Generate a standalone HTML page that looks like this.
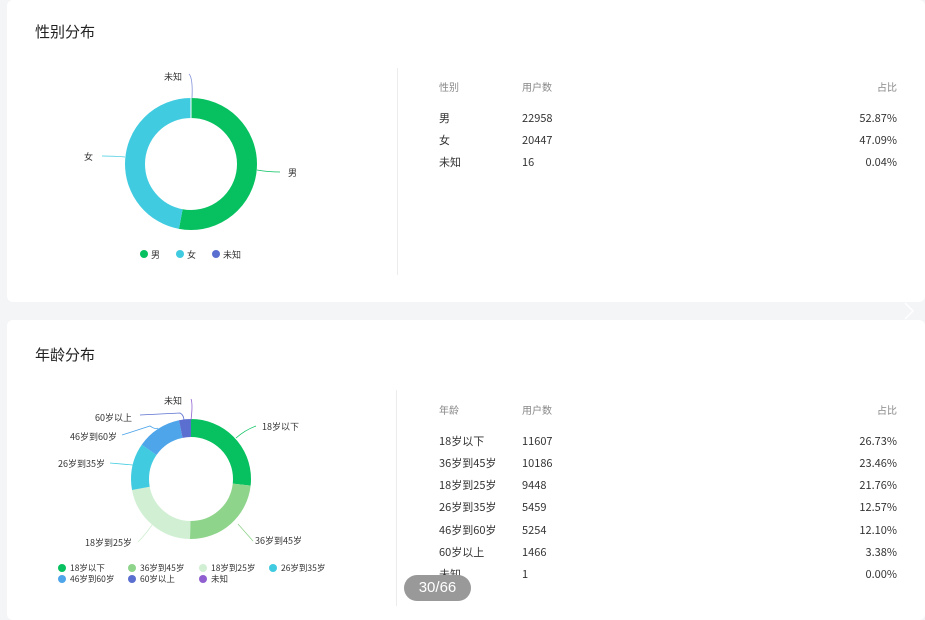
<!DOCTYPE html>
<html><head><meta charset="utf-8"><style>
*{margin:0;padding:0;box-sizing:border-box}
body{width:925px;height:606px;background:#f4f5f7;font-family:"Noto Sans CJK SC","Liberation Sans",sans-serif;position:relative;overflow:hidden;color:#333}
.card{position:absolute;left:7px;right:0;background:#fff;border-radius:6px}
.t{position:absolute;font-size:11px;line-height:14px;white-space:nowrap}
.h{color:#888;font-size:10px}
.title{position:absolute;left:28px;font-size:15px;line-height:20px;color:#222}
.vl{position:absolute;width:1px;background:#ececec}
.r{text-align:right;right:28px}
</style></head><body>
<div class="card" style="top:0;height:302px"></div>
<div class="card" style="top:320px;height:300px"></div>
<div class="title" style="left:35px;top:22px">性别分布</div>
<div class="title" style="left:35px;top:345px">年龄分布</div>
<div class="vl" style="left:397px;top:68px;height:207px"></div>
<div class="vl" style="left:396px;top:390px;height:216px"></div>
<svg width="925" height="606" style="position:absolute;left:0;top:0" font-family="Noto Sans CJK SC,Liberation Sans,sans-serif" font-size="9" fill="#333">
<g transform="rotate(-90 191 164)" fill="none" stroke-width="20">
<circle cx="191" cy="164" r="56" stroke="#07c160" stroke-dasharray="186.03 400"/>
<circle cx="191" cy="164" r="56" stroke="#40cbe0" stroke-dasharray="165.69 400" stroke-dashoffset="-186.03"/>
</g>
<line x1="191" y1="98" x2="191" y2="118" stroke="#fff" stroke-width="1"/>
<path d="M189 74 Q193 78 192 98" stroke="#8090d8" fill="none" stroke-width="0.8"/>
<path d="M257 170 Q268 172 280 172" stroke="#07c160" fill="none" stroke-width="0.8"/>
<path d="M102 156 Q115 156 125 157" stroke="#40cbe0" fill="none" stroke-width="0.8"/>
<text x="164" y="80">未知</text><text x="288" y="176">男</text><text x="84" y="160">女</text>
<circle cx="144" cy="254" r="4" fill="#07c160"/><text x="151" y="258">男</text>
<circle cx="180" cy="254" r="4" fill="#40cbe0"/><text x="187" y="258">女</text>
<circle cx="216" cy="254" r="4" fill="#5b6fd0"/><text x="223" y="258">未知</text>
<g transform="rotate(-90 191 479)" fill="none" stroke-width="18">
<circle cx="191" cy="479" r="51" stroke="#07c160" stroke-dasharray="85.65 400"/>
<circle cx="191" cy="479" r="51" stroke="#8ed48b" stroke-dasharray="75.18 400" stroke-dashoffset="-85.65"/>
<circle cx="191" cy="479" r="51" stroke="#d0efd3" stroke-dasharray="69.73 400" stroke-dashoffset="-160.83"/>
<circle cx="191" cy="479" r="51" stroke="#40cbe0" stroke-dasharray="40.28 400" stroke-dashoffset="-230.56"/>
<circle cx="191" cy="479" r="51" stroke="#4ea5ea" stroke-dasharray="38.77 400" stroke-dashoffset="-270.84"/>
<circle cx="191" cy="479" r="51" stroke="#5b6fd0" stroke-dasharray="10.83 400" stroke-dashoffset="-309.61"/>
</g>
<path d="M191 399 Q193 404 191 420" stroke="#9060d0" fill="none" stroke-width="0.8"/>
<path d="M140 415 L180 413 Q184 415 184 421" stroke="#5b6fd0" fill="none" stroke-width="0.8"/>
<path d="M122 435 L150 426 Q156 430 158 428" stroke="#4ea5ea" fill="none" stroke-width="0.8"/>
<path d="M110 463 L133 465" stroke="#40cbe0" fill="none" stroke-width="0.8"/>
<path d="M138 542 Q145 535 152 525" stroke="#d0efd3" fill="none" stroke-width="0.8"/>
<path d="M236 438 Q245 430 256 426" stroke="#07c160" fill="none" stroke-width="0.8"/>
<path d="M238 524 Q245 532 253 541" stroke="#8ed48b" fill="none" stroke-width="0.8"/>
<text x="164" y="404">未知</text><text x="95" y="421">60岁以上</text><text x="70" y="440">46岁到60岁</text>
<text x="58" y="467">26岁到35岁</text><text x="85" y="546">18岁到25岁</text>
<text x="262" y="430">18岁以下</text><text x="255" y="544">36岁到45岁</text>
<g font-size="8.5">
<circle cx="62" cy="568" r="4" fill="#07c160"/><text x="70" y="571">18岁以下</text>
<circle cx="132" cy="568" r="4" fill="#8ed48b"/><text x="140" y="571">36岁到45岁</text>
<circle cx="203" cy="568" r="4" fill="#d0efd3"/><text x="211" y="571">18岁到25岁</text>
<circle cx="273" cy="568" r="4" fill="#40cbe0"/><text x="281" y="571">26岁到35岁</text>
<circle cx="62" cy="579" r="4" fill="#4ea5ea"/><text x="70" y="582">46岁到60岁</text>
<circle cx="132" cy="579" r="4" fill="#5b6fd0"/><text x="140" y="582">60岁以上</text>
<circle cx="203" cy="579" r="4" fill="#9060d0"/><text x="211" y="582">未知</text>
</g>
<path d="M905 303 L913 311 L905 319" stroke="#fff" fill="none" stroke-width="1.5"/>
</svg>
<div class="t h" style="left:439px;top:80px">性别</div><div class="t h" style="left:522px;top:80px">用户数</div><div class="t h r" style="top:80px">占比</div>
<div class="t" style="left:439px;top:111px">男</div><div class="t" style="left:522px;top:111px">22958</div><div class="t r" style="top:111px">52.87%</div>
<div class="t" style="left:439px;top:133px">女</div><div class="t" style="left:522px;top:133px">20447</div><div class="t r" style="top:133px">47.09%</div>
<div class="t" style="left:439px;top:155px">未知</div><div class="t" style="left:522px;top:155px">16</div><div class="t r" style="top:155px">0.04%</div>
<div class="t h" style="left:439px;top:403px">年龄</div><div class="t h" style="left:522px;top:403px">用户数</div><div class="t h r" style="top:403px">占比</div>
<div class="t" style="left:439px;top:434px">18岁以下</div><div class="t" style="left:522px;top:434px">11607</div><div class="t r" style="top:434px">26.73%</div>
<div class="t" style="left:439px;top:456px">36岁到45岁</div><div class="t" style="left:522px;top:456px">10186</div><div class="t r" style="top:456px">23.46%</div>
<div class="t" style="left:439px;top:478px">18岁到25岁</div><div class="t" style="left:522px;top:478px">9448</div><div class="t r" style="top:478px">21.76%</div>
<div class="t" style="left:439px;top:500px">26岁到35岁</div><div class="t" style="left:522px;top:500px">5459</div><div class="t r" style="top:500px">12.57%</div>
<div class="t" style="left:439px;top:523px">46岁到60岁</div><div class="t" style="left:522px;top:523px">5254</div><div class="t r" style="top:523px">12.10%</div>
<div class="t" style="left:439px;top:545px">60岁以上</div><div class="t" style="left:522px;top:545px">1466</div><div class="t r" style="top:545px">3.38%</div>
<div class="t" style="left:439px;top:567px">未知</div><div class="t" style="left:522px;top:567px">1</div><div class="t r" style="top:567px">0.00%</div>
<div style="position:absolute;left:404px;top:575px;width:67px;height:26px;border-radius:13px;background:#999;color:#fff;font-size:15px;text-align:center;line-height:26px;font-family:'Liberation Sans',sans-serif">30/66</div>
</body></html>
